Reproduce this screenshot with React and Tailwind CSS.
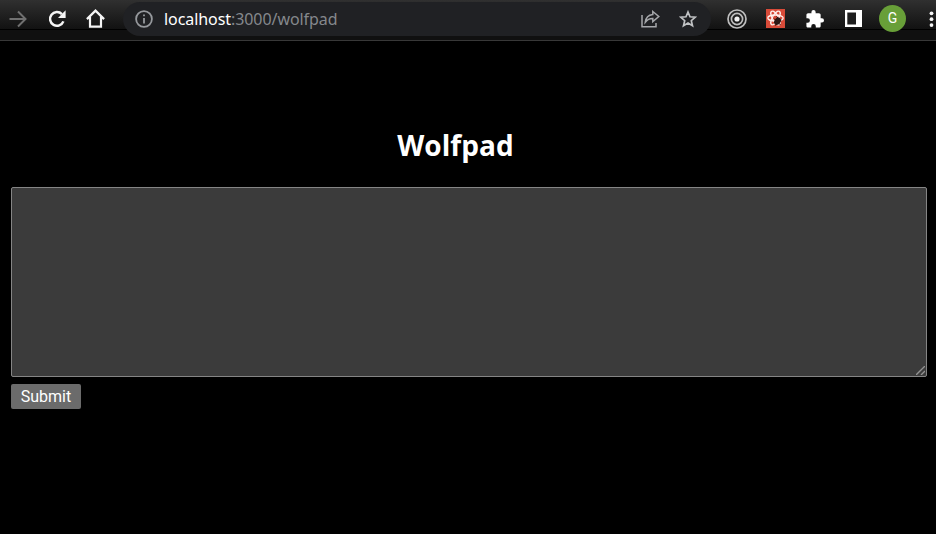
import React from "react";

function Toolbar() {
  return (
    <header className="relative h-[42px] overflow-hidden border-b border-black bg-[#101010] font-['Noto_Sans',sans-serif]">
      <div className="h-[30px] border-b border-black bg-linear-to-b from-[#303030] to-[#121212]" />
      <div className="h-[11px] border-b border-[#383838]" />
      <div className="absolute inset-x-0 top-0 flex h-[37px] items-center *:shrink-0">
        <svg className="ml-[9px] h-[18px] w-[18px]" viewBox="0 0 18 18" fill="none" stroke="#707070" strokeWidth="2">
          <path d="M0.5 9H16.5M9 1.5L16.5 9L9 16.5" />
        </svg>
        <svg className="ml-[21px] h-[18px] w-[18px]" viewBox="0 0 18 18" fill="none" stroke="#f5f5f5" strokeWidth="2.5">
          <path d="M15.4 11.4A6.9 6.9 0 1 1 13.9 4.1" />
          <path d="M17.6 0.3V8H10Z" fill="#f5f5f5" stroke="none" />
        </svg>
        <svg className="ml-[20px] h-[19px] w-[19px]" viewBox="0 0 19 19" fill="none" stroke="#f5f5f5" strokeWidth="2.2">
          <path d="M0.9 10.1L9.5 1.6L18.1 10.1M4 8V17.7H15V8" />
        </svg>
        <div className="ml-[18px] flex h-[34px] w-[588px] items-center rounded-full bg-[#202124] *:shrink-0">
          <svg className="ml-[12px] h-[18px] w-[18px]" viewBox="0 0 18 18" fill="none" stroke="#96999d" strokeWidth="1.8">
            <circle cx="9" cy="9" r="7.9" />
            <path d="M9 8V13.5M9 4.4V6.3" />
          </svg>
          <span className="ml-[11px] w-[477px] text-[16px] leading-[22px] tracking-[-0.07px] text-[#85888c]">
            <span className="text-white">localhost</span>:3000/wolfpad
          </span>
          <svg className="h-[18px] w-[19px]" viewBox="0 0 19 18" fill="none" stroke="#a6a8ab" strokeWidth="1.5">
            <path d="M1 5V16.8H15V13" />
            <path d="M11.8 1.5L17.8 6.5L11.8 11.6V8.5C8.5 8.4 6.2 9.7 4.3 12.2C4.8 8 7.2 5 11.8 4.5Z" />
          </svg>
          <svg className="ml-[19px] h-[18px] w-[18px]" viewBox="0 0 18 18" fill="none" stroke="#c0c2c4" strokeWidth="1.7">
            <path d="M9 2L11 6.8L16.2 7.2L12.3 10.7L13.5 15.8L9 13.1L4.5 15.8L5.7 10.7L1.8 7.2L7 6.8Z" />
          </svg>
        </div>
        <svg className="ml-[16px] h-[20px] w-[20px]" viewBox="0 0 20 20" fill="none" stroke="#bdbdbd" strokeWidth="1.7">
          <circle cx="10" cy="10" r="9" />
          <circle cx="10" cy="10" r="5.6" />
          <circle cx="10" cy="10" r="2.6" fill="#f0f0f0" stroke="none" />
        </svg>
        <svg className="ml-[19px] h-[19px] w-[19px]" viewBox="0 0 19 19" fill="none">
          <path d="M0 0H19V19H0Z" fill="#d84b39" />
          <g stroke="#fff0ed" strokeWidth="1.3">
            <ellipse cx="9.5" cy="9" rx="7.7" ry="3" />
            <ellipse cx="9.5" cy="9" rx="7.7" ry="3" transform="rotate(60 9.5 9)" />
            <ellipse cx="9.5" cy="9" rx="7.7" ry="3" transform="rotate(120 9.5 9)" />
          </g>
          <ellipse cx="11.5" cy="12.2" rx="3" ry="4" fill="#2b1714" transform="rotate(35 11.5 12.2)" />
          <path d="M8 9.5L14.5 16M15.5 11L9 16.5M10.5 7.5L13 10" stroke="#2b1714" strokeWidth="1" />
        </svg>
        <svg className="mt-px ml-[21px] h-[18px] w-[18px]" viewBox="1.5 1 21.5 21.5" fill="#fff">
          <path d="M20.5 11H19V7c0-1.1-.9-2-2-2h-4V3.5a2.5 2.5 0 0 0-5 0V5H4c-1.1 0-1.99.9-1.99 2v3.8H3.5a2.7 2.7 0 0 1 0 5.4H2V20c0 1.1.9 2 2 2h3.8v-1.5a2.7 2.7 0 0 1 5.4 0V22H17c1.1 0 2-.9 2-2v-4h1.5a2.5 2.5 0 0 0 0-5z" />
        </svg>
        <svg className="ml-[21px] h-[17px] w-[17px]" viewBox="0 0 17 17">
          <path d="M0 0H17V17H0Z" fill="#fff" />
          <path d="M2.3 2.5H11V14.5H2.3Z" fill="#1d1d1d" />
        </svg>
        <div className="ml-[17px] flex h-[27px] w-[27px] items-center justify-center rounded-full bg-[#689f38] font-['Roboto',sans-serif] text-[14px] text-white">G</div>
        <svg className="ml-[23px] h-[18px] w-[5px]" viewBox="0 0 5 18" fill="#f5f5f5">
          <circle cx="2.5" cy="3.3" r="1.9" />
          <circle cx="2.5" cy="9.2" r="1.9" />
          <circle cx="2.5" cy="15.1" r="1.9" />
        </svg>
      </div>
    </header>
  );
}

export default function App() {
  return (
    <div className="h-[534px] overflow-hidden bg-black">
      <Toolbar />
      <main className="flex flex-col items-start pr-[9px] pl-[11px] pt-[83px]">
        <h1 className="-ml-[11px] w-[932px] text-center font-['Open_Sans',sans-serif] text-[28px] leading-[40px] font-bold tracking-[0.08px] text-white">
          <span className="-ml-[21px]">Wolfpad</span>
        </h1>
        <div className="relative mt-[22px] h-[190px] w-full">
          <textarea
            aria-label="Wolfpad"
            className="block h-full w-full resize-none rounded-[2px] border border-[#858585] bg-[#3b3b3b] p-1 text-white outline-none"
          />
          <svg className="pointer-events-none absolute right-[2px] bottom-[2px] h-[9px] w-[9px]" viewBox="0 0 9 9" stroke="#929292" strokeWidth="1.4">
            <path d="M0 9L9 0M5 9L9 5" />
          </svg>
        </div>
        <button className="mt-[7px] h-[25px] w-[70px] rounded-[2px] bg-[#6b6b6b] text-center font-['Roboto',sans-serif] text-[16px] leading-[25px] text-white">
          Submit
        </button>
      </main>
    </div>
  );
}
